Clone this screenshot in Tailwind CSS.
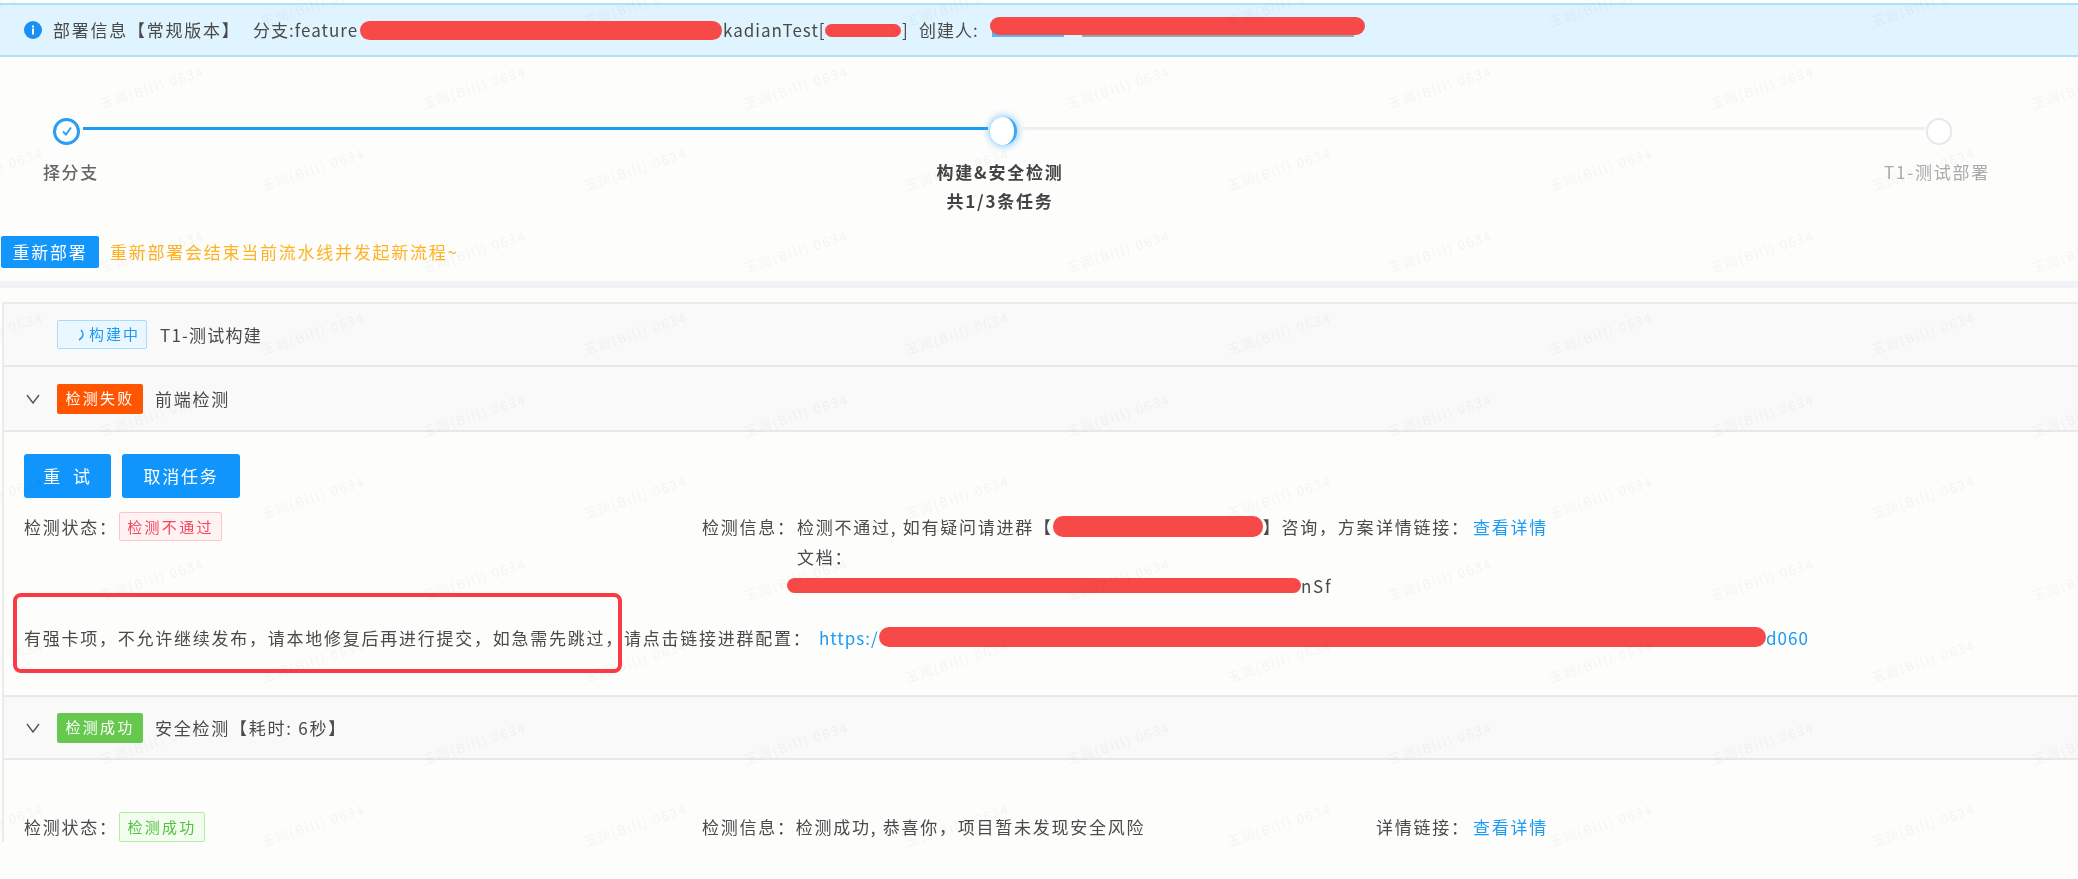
<!DOCTYPE html>
<html lang="zh-CN">
<head>
<meta charset="utf-8">
<title>部署信息</title>
<script src="https://cdn.jsdelivr.net/npm/@tailwindcss/browser@4"></script>
</head>
<body class="bg-[#fdfdfc]">
<div class="relative w-[2078px] h-[879px] overflow-hidden bg-[#fdfdfc] text-[17px] tracking-[1.75px] text-[#4a4a4a] blur-[0.5px] font-['Noto_Sans_CJK_SC','Noto_Sans',sans-serif]">

  <!-- banner -->
  <div class="mt-[3px] h-[54px] flex items-center whitespace-nowrap bg-[#dff4ff] border-y-2 border-[#aee0fa] pl-[24px]">
    <svg class="w-[18px] h-[18px] shrink-0" viewBox="0 0 18 18"><circle cx="9" cy="9" r="9" fill="#1a90f5"/><rect x="8" y="7.5" width="2" height="6" fill="#fff"/><rect x="8" y="4.5" width="2" height="2" fill="#fff"/></svg>
    <span class="ml-[11px] w-[200px]">部署信息【常规版本】</span>
    <span class="w-[107px] tracking-[1px]">分支:feature</span>
    <span class="relative z-10 w-[362px] h-[19px] rounded-[10px] bg-[#f74a48]"></span>
    <span class="w-[102px] ml-[1px] tracking-[1px]">kadianTest[</span>
    <span class="w-[76px] h-[13px] rounded-[7px] bg-[#f74a48]"></span>
    <span class="w-[17px] ml-[1px]">]</span>
    <span class="w-[71px] tracking-[1px]">创建人:</span>
    <span class="relative w-[375px] h-[18px] -mt-[9px]">
      <span class="absolute left-[2px] top-[15px] w-[72px] h-[5px] bg-[#5db5f0]"></span>
      <span class="absolute left-[92px] top-[15px] w-[272px] h-[5px] bg-[#9aa7ad]"></span>
      <span class="absolute inset-0 rounded-[9px] bg-[#f74a48]"></span>
    </span>
  </div>

  <!-- steps -->
  <div class="mt-[60px] h-[28px] flex items-center pl-[53px]">
    <span class="w-[27px] h-[27px] shrink-0 rounded-full border-[3px] border-[#2a9df4] bg-white flex items-center justify-center">
      <svg class="w-[14px] h-[14px]" viewBox="0 0 14 14" fill="none" stroke="#2a9df4" stroke-width="1.8"><path d="M3 7.5 6 10.5 11 3.5"/></svg>
    </span>
    <span class="ml-[3px] w-[905px] h-[3px] -mt-[6px] bg-[#1a9bf5]"></span>
    <span class="ml-[2px] w-[27px] h-[28px] shrink-0 rounded-full bg-white border-r-[3px] border-[#3ea6f5] shadow-[0_0_9px_#5bb4f7]"></span>
    <span class="ml-[3px] w-[905px] h-[3px] -mt-[6px] bg-[#efefef]"></span>
    <span class="ml-[1px] w-[26px] h-[27px] shrink-0 rounded-full border-[2px] border-[#e8e8e8] bg-white"></span>
  </div>
  <div class="mt-[12px] grid grid-cols-[142px_1716px_158px] text-center leading-[29px]">
    <div class="font-medium text-[#666]">择分支</div>
    <div class="font-bold text-[#444]">构建&amp;安全检测<br>共1/3条任务</div>
    <div class="text-[#aaa]">T1-测试部署</div>
  </div>

  <!-- redeploy -->
  <div class="mt-[21px] flex items-center">
    <button class="ml-[1px] w-[98px] h-[32px] rounded-[2px] bg-[#1296fb] text-white">重新部署</button>
    <span class="ml-[11px] text-[#ffb224]">重新部署会结束当前流水线并发起新流程~</span>
  </div>
  <div class="mt-[13px] h-[7px] bg-[#f1f3f7]"></div>

  <!-- card -->
  <div class="mt-[14px] ml-[2px] border-l-2 border-t-2 border-[#ececec]">
    <div class="h-[61px] box-content flex items-center bg-[#f9f9f9] border-b-2 border-[#e8e8e8] pl-[53px]">
      <span class="w-[90px] h-[29px] rounded-[2px] border border-[#a8dcff] bg-[#eaf7ff] text-[#1a9bf5] text-[15px] tracking-[2px] flex items-center justify-end pr-[6px]">
        <svg class="w-[8px] h-[14px] mr-[3px]" viewBox="0 0 8 14" fill="none" stroke="#1a9bf5" stroke-width="1.5"><path d="M3 2C6 5 6 9 1 12"/></svg>构建中
      </span>
      <span class="ml-[13px] tracking-[1.2px]">T1-测试构建</span>
    </div>
    <div class="h-[63px] box-content flex items-center bg-[#f9f9f9] border-b-2 border-[#e8e8e8] pl-[22px]">
      <svg class="w-[14px] h-[10px] shrink-0" viewBox="0 0 14 10" fill="none" stroke="#555" stroke-width="1.4"><path d="M1 1 7 9 13 1"/></svg>
      <span class="ml-[17px] w-[86px] h-[30px] rounded-[2px] bg-[#ff5500] text-white text-[15px] tracking-[2.3px] flex items-center justify-center">检测失败</span>
      <span class="ml-[12px]">前端检测</span>
    </div>

    <div class="h-[263px] pl-[20px] pt-[22px]">
      <div class="flex gap-[11px]">
        <button class="w-[87px] h-[44px] rounded-[3px] bg-[#0f95fb] text-white">重&nbsp;&nbsp;试</button>
        <button class="w-[118px] h-[44px] rounded-[3px] bg-[#0f95fb] text-white">取消任务</button>
      </div>
      <div class="mt-[14px] grid grid-cols-[678px_674px_1fr] leading-[29.5px] whitespace-nowrap">
        <div class="flex items-start">
          <span class="w-[95px]">检测状态：</span>
          <span class="w-[103px] h-[29px] rounded-[2px] border border-[#fbc4c8] bg-[#fff2f3] text-[#f5475a] text-[15px] tracking-[2.3px] leading-[27px] text-center">检测不通过</span>
        </div>
        <div class="flex items-start">
          <span class="w-[95px]">检测信息：</span>
          <div>
            <div class="flex items-center">检测不通过, 如有疑问请进群【<span class="w-[210px] h-[21px] rounded-[10px] bg-[#f74a48]"></span>】咨询，方案</div>
            <div>文档：</div>
            <div class="flex items-center -ml-[10px]"><span class="w-[514px] h-[15px] rounded-[8px] bg-[#f74a48]"></span>nSf</div>
          </div>
        </div>
        <div class="flex items-start">
          <span class="w-[97px]">详情链接：</span>
          <a class="text-[#1a9bf5]">查看详情</a>
        </div>
      </div>
      <div class="mt-[22px] flex items-center leading-[29px] whitespace-nowrap">
        <span class="w-[795px]">有强卡项，不允许继续发布，请本地修复后再进行提交，如急需先跳过，请点击链接进群配置：</span>
        <a class="w-[60px] text-[#1a9bf5] tracking-[1px]">https:/</a>
        <span class="w-[887px] h-[20px] rounded-[10px] bg-[#f74a48]"></span>
        <a class="text-[#1a9bf5] tracking-[1px]">d060</a>
      </div>
    </div>

    <div class="h-[61px] box-content flex items-center bg-[#f9f9f9] border-y-2 border-[#e8e8e8] pl-[22px]">
      <svg class="w-[14px] h-[10px] shrink-0" viewBox="0 0 14 10" fill="none" stroke="#555" stroke-width="1.4"><path d="M1 1 7 9 13 1"/></svg>
      <span class="ml-[17px] w-[86px] h-[30px] rounded-[2px] bg-[#67c84f] text-white text-[15px] tracking-[2.3px] flex items-center justify-center">检测成功</span>
      <span class="ml-[12px]">安全检测【耗时: 6秒】</span>
    </div>

    <div class="pl-[20px] pt-[52px] grid grid-cols-[678px_674px_1fr] leading-[30px] whitespace-nowrap">
      <div class="flex items-start">
        <span class="w-[95px]">检测状态：</span>
        <span class="w-[86px] h-[30px] rounded-[2px] border border-[#b4eca4] bg-[#f2fdef] text-[#55c040] text-[15px] tracking-[2.3px] leading-[28px] text-center">检测成功</span>
      </div>
      <div>检测信息：检测成功, 恭喜你，项目暂未发现安全风险</div>
      <div class="flex items-start">
        <span class="w-[97px]">详情链接：</span>
        <a class="text-[#1a9bf5]">查看详情</a>
      </div>
    </div>
  </div>

  <!-- watermark over the page -->
  <svg class="absolute inset-0 w-full h-full pointer-events-none" xmlns="http://www.w3.org/2000/svg">
    <defs>
      <pattern id="wm" x="92" y="397" width="322" height="164" patternUnits="userSpaceOnUse">
        <text transform="translate(10 40) rotate(-18)" font-size="13" fill="#000" fill-opacity="0.035" font-family="Noto Sans CJK SC">玉润(Bill) 0634</text>
        <text transform="translate(171 122) rotate(-18)" font-size="13" fill="#000" fill-opacity="0.035" font-family="Noto Sans CJK SC">玉润(Bill) 0634</text>
      </pattern>
    </defs>
    <rect width="2078" height="879" fill="url(#wm)"/>
  </svg>

  <!-- red annotation box -->
  <div class="absolute left-[13px] top-[593px] w-[609px] h-[80px] rounded-[8px] border-[4px] border-[#fa3a45]"></div>
</div>
</body>
</html>
